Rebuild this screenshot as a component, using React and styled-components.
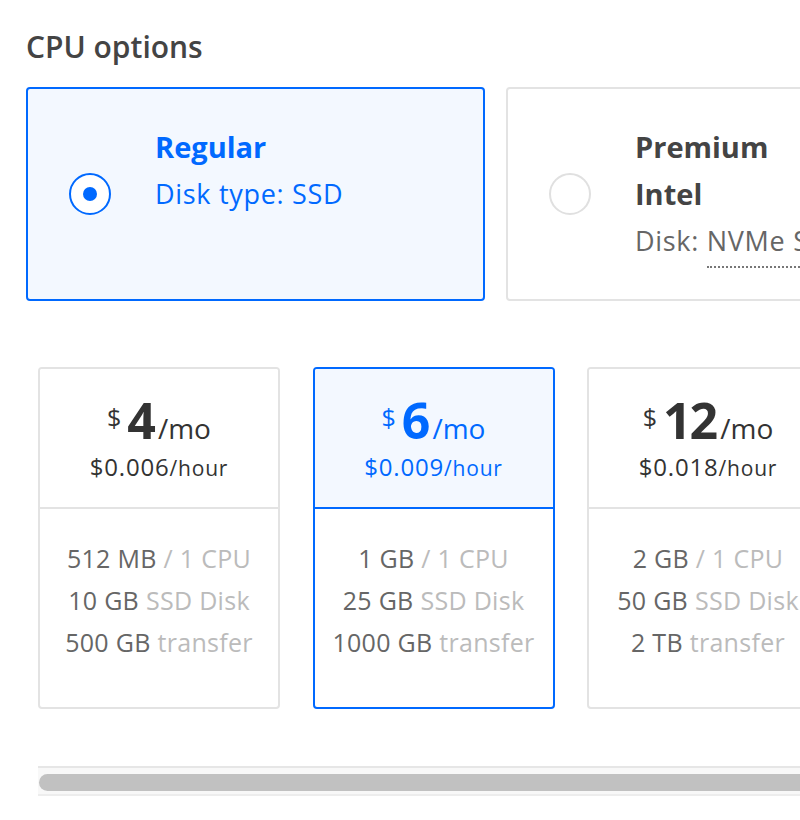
import React from 'react';
import styled, { createGlobalStyle } from 'styled-components';

const plans = [
  { price: 4, hourly: '0.006', mem: '512 MB', cpu: '1 CPU', disk: '10 GB', transfer: '500 GB' },
  { price: 6, hourly: '0.009', mem: '1 GB', cpu: '1 CPU', disk: '25 GB', transfer: '1000 GB', selected: true },
  { price: 12, hourly: '0.018', mem: '2 GB', cpu: '1 CPU', disk: '50 GB', transfer: '2 TB' },
  { price: 18, hourly: '0.027', mem: '2 GB', cpu: '2 CPUs', disk: '60 GB', transfer: '3 TB' },
];

const App = () => {
  return (
    <>
      <GlobalStyle />
      <Page>
        <Title>CPU options</Title>
        <OptionRow>
          <OptionCard $selected>
            <Radio $selected />
            <OptionText $selected>
              <OptionName>Regular</OptionName>
              <OptionSub>Disk type: SSD</OptionSub>
            </OptionText>
          </OptionCard>
          <OptionCard>
            <Radio />
            <OptionText>
              <OptionName>Premium</OptionName>
              <OptionName>Intel</OptionName>
              <OptionSub>Disk: <Dotted>NVMe SSD</Dotted></OptionSub>
            </OptionText>
          </OptionCard>
        </OptionRow>

        <PlanArea>
          <PlanRow>
            {plans.map(plan => (
              <PlanCard key={plan.price} $selected={plan.selected}>
                <PlanHead $selected={plan.selected}>
                  <Monthly>
                    <Dollar>$</Dollar>
                    <Amount>{plan.price}</Amount>
                    <Per>/mo</Per>
                  </Monthly>
                  <Hourly>
                    ${plan.hourly}<small>/hour</small>
                  </Hourly>
                </PlanHead>
                <PlanBody>
                  <Spec>{plan.mem} <Faded>/ {plan.cpu}</Faded></Spec>
                  <Spec>{plan.disk} <Faded>SSD Disk</Faded></Spec>
                  <Spec>{plan.transfer} <Faded>transfer</Faded></Spec>
                </PlanBody>
              </PlanCard>
            ))}
          </PlanRow>
          <ScrollTrack>
            <ScrollThumb />
          </ScrollTrack>
        </PlanArea>
      </Page>
    </>
  );
};

export default App;


const GlobalStyle = createGlobalStyle`
  html, body {
    margin: 0;
    overflow: hidden;
    background: #fff;
  }
  body {
    font-family: 'Open Sans', 'Noto Sans', sans-serif;
    color: #444;
  }
`;
const Page = styled.div`
  width: 1100px;
  padding: 26px 0 0 26px;
  box-sizing: border-box;
`;
const Title = styled.h2`
  margin: 0;
  font-size: 30px;
  font-weight: 600;
  line-height: 42px;
  color: #444;
`;
const OptionRow = styled.div`
  display: flex;
  gap: 21px;
  margin-top: 19px;
`;
const OptionCard = styled.div`
  box-sizing: border-box;
  width: 459px;
  height: 214px;
  display: flex;
  align-items: center;
  padding: 0 40px 0 41px;
  border-radius: 4px;
  border: ${p => p.$selected ? '2px solid #0069ff' : '2px solid #e3e3e3'};
  background: ${p => p.$selected ? '#f3f8ff' : '#fff'};
`;
const Radio = styled.span`
  position: relative;
  flex: none;
  width: 42px;
  height: 42px;
  box-sizing: border-box;
  border-radius: 50%;
  border: 2px solid ${p => p.$selected ? '#0069ff' : '#e0e0e0'};
  background: #fff;

  &::after {
    content: '';
    display: ${p => p.$selected ? 'block' : 'none'};
    position: absolute;
    left: 50%;
    top: 50%;
    width: 14px;
    height: 14px;
    margin: -7px 0 0 -7px;
    border-radius: 50%;
    background: #0069ff;
  }
`;
const OptionText = styled.div`
  align-self: flex-start;
  margin: 34px 0 0 44px;
  display: flex;
  flex-direction: column;
  color: ${p => p.$selected ? '#0069ff' : '#444'};
  --sub: ${p => p.$selected ? '#0069ff' : '#666'};
`;
const OptionName = styled.span`
  font-size: 29px;
  font-weight: 700;
  line-height: 47px;
`;
const OptionSub = styled.span`
  font-size: 27px;
  letter-spacing: 0.7px;
  line-height: 47px;
  color: var(--sub);
  white-space: nowrap;
`;
const Dotted = styled.span`
  border-bottom: 2px dotted #777;
  padding-bottom: 7px;
`;
const PlanArea = styled.div`
  width: 1000px;
  margin: 66px 0 0 12px;
`;
const PlanRow = styled.div`
  display: flex;
  gap: 32.5px;
  overflow: hidden;
`;
const ScrollTrack = styled.div`
  margin-top: 57px;
  height: 30px;
  padding: 6px 0 0 1px;
  box-sizing: border-box;
  background: #f8f8f8;
  border-top: 2px solid #e6e6e6;
  border-bottom: 2px solid #ededed;
`;
const ScrollThumb = styled.div`
  width: 92%;
  height: 17px;
  border-radius: 9px;
  background: #c1c1c1;
`;
const PlanCard = styled.div`
  flex: none;
  box-sizing: border-box;
  width: 242px;
  height: 342px;
  display: flex;
  flex-direction: column;
  border-radius: 4px;
  border: 2px solid ${p => p.$selected ? '#0069ff' : '#e3e3e3'};
  overflow: hidden;
`;
const PlanHead = styled.div`
  height: 140px;
  flex: none;
  box-sizing: border-box;
  display: flex;
  flex-direction: column;
  align-items: center;
  padding-top: 24px;
  border-bottom: 2px solid ${p => p.$selected ? '#0069ff' : '#e3e3e3'};
  background: ${p => p.$selected ? '#f3f8ff' : '#fff'};
  color: ${p => p.$selected ? '#0069ff' : '#333'};
`;
const Monthly = styled.div`
  display: flex;
  align-items: baseline;
  line-height: 54px;
`;
const Dollar = styled.span`
  font-size: 25px;
  align-self: flex-start;
  line-height: 30px;
  margin-top: 9px;
  margin-right: 6px;
`;
const Amount = styled.span`
  font-size: 50px;
  font-weight: 700;
  letter-spacing: -2px;
`;
const Per = styled.span`
  font-size: 28px;
  margin-left: 4px;
`;
const Hourly = styled.div`
  font-size: 24px;
  line-height: 24px;
  letter-spacing: 0.8px;

  small {
    font-size: 21px;
  }
`;
const PlanBody = styled.div`
  flex: 1;
  display: flex;
  flex-direction: column;
  align-items: center;
  padding-top: 28px;
`;
const Spec = styled.div`
  font-size: 25px;
  letter-spacing: 0.3px;
  line-height: 42px;
  color: #666;
  white-space: nowrap;
`;
const Faded = styled.span`
  color: #bbb;
`;
